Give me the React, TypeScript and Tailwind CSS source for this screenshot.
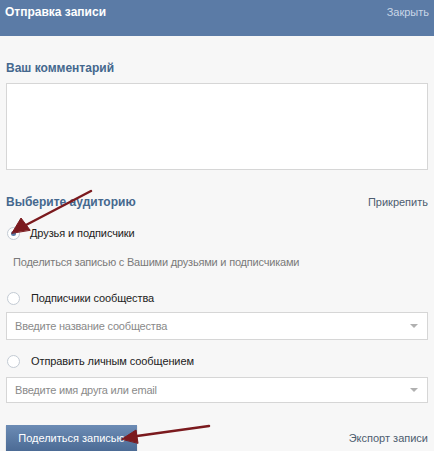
const Radio = ({ checked }: { checked?: boolean }) => (
  <span className="flex size-[13px] shrink-0 items-center justify-center rounded-full border border-[#c3cbd4] bg-white">
    {checked && <span className="size-[5px] rounded-full bg-[#5b7ba6]" />}
  </span>
);

const SelectBox = ({ placeholder, h }: { placeholder: string; h: string }) => (
  <div
    className={`flex items-center justify-between border border-[#d6d6d6] bg-white pl-[8px] pr-[9px] text-[11px] tracking-[-0.2px] text-[#8a8a8a] ${h}`}
  >
    <span>{placeholder}</span>
    <span className="h-0 w-0 border-x-[4px] border-t-[4px] border-x-transparent border-t-[#b0b0b0]" />
  </div>
);

const App = () => {
  return (
    <div
      className="relative h-[451px] w-[434px] overflow-hidden bg-[#f7f7f7]"
      style={{ fontFamily: '"Liberation Sans", Arial, sans-serif' }}
    >
      <div className="flex h-[36px] justify-between bg-[#5b7ba6] px-[5px] pt-[4px] leading-[16px]">
        <span className="text-[12px] font-bold text-white">Отправка записи</span>
        <span className="text-[11px] text-[#c9d6e6]">Закрыть</span>
      </div>

      <div className="flex flex-col px-[6px]">
        <h3 className="mt-[24px] text-[12px] font-bold leading-[16px] text-[#45688e]">
          Ваш комментарий
        </h3>
        <div className="mt-[7px] h-[87px] border border-[#d6d6d6] bg-white" />

        <div className="mt-[24px] flex items-center justify-between leading-[16px]">
          <h3 className="text-[12px] font-bold text-[#45688e]">Выберите аудиторию</h3>
          <span className="text-[11px] text-[#4d5d70]">Прикрепить</span>
        </div>

        <label className="mt-[15px] flex items-center gap-[10px] pl-[1px] text-[11px] leading-[16px] tracking-[-0.1px] text-[#222]">
          <Radio checked />
          Друзья и подписчики
        </label>
        <p className="mt-[13px] pl-[7px] text-[11px] leading-[16px] tracking-[-0.2px] text-[#7a7a7a]">
          Поделиться записью с Вашими друзьями и подписчиками
        </p>

        <label className="mt-[20px] flex items-center gap-[11px] pl-[1px] text-[11px] leading-[16px] tracking-[-0.1px] text-[#222]">
          <Radio />
          Подписчики сообщества
        </label>
        <div className="mt-[6px]">
          <SelectBox placeholder="Введите название сообщества" h="h-[28px]" />
        </div>

        <label className="mt-[13px] flex items-center gap-[11px] pl-[1px] text-[11px] leading-[16px] tracking-[-0.1px] text-[#222]">
          <Radio />
          Отправить личным сообщением
        </label>
        <div className="mt-[8px]">
          <SelectBox placeholder="Введите имя друга или email" h="h-[26px]" />
        </div>

        <div className="mt-[22px] flex items-center justify-between">
          <button className="h-[26px] w-[131px] bg-gradient-to-b from-[#6c8cb5] to-[#4c6b95] text-[11px] text-white shadow-[0_1px_1px_rgba(0,0,0,0.25)]">
            Поделиться записью
          </button>
          <span className="text-[11px] text-[#4d5d70]">Экспорт записи</span>
        </div>
      </div>

      <svg className="pointer-events-none absolute left-0 top-0" width="434" height="451">
        <g fill="#7b1a1e" stroke="#7b1a1e" strokeLinecap="round">
          <line x1="91" y1="191" x2="26" y2="225" strokeWidth="2.5" />
          <polygon points="12,233 21,218 30,230" />
          <line x1="209" y1="426" x2="137" y2="436" strokeWidth="2.5" />
          <polygon points="122,439 136,430 138,443" />
        </g>
      </svg>
    </div>
  );
};

export default App;
